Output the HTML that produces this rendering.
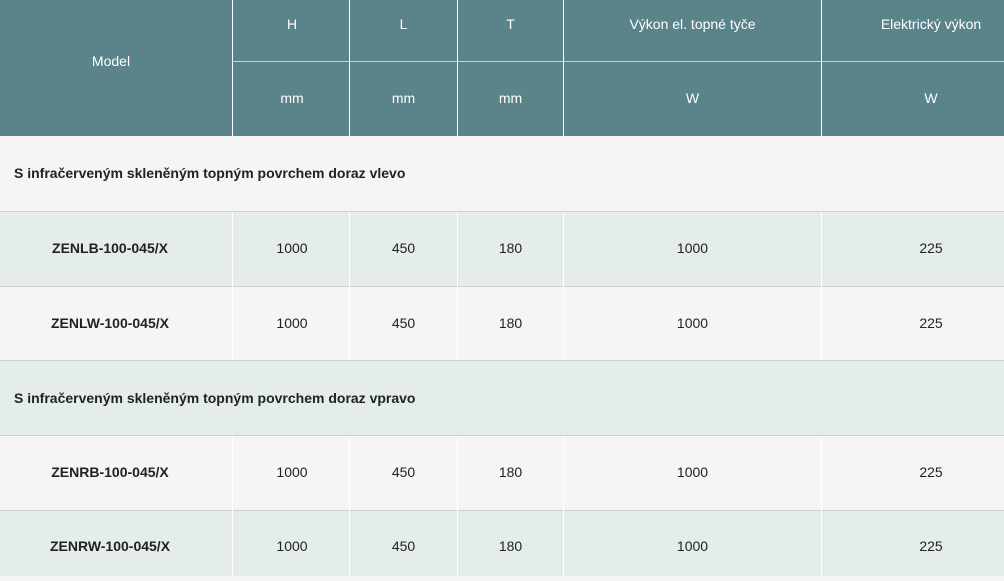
<!DOCTYPE html>
<html><head><meta charset="utf-8"><style>
body{margin:0;width:1004px;height:576px;overflow:hidden;background:#f5f5f5;font-family:"Liberation Sans",Arial,sans-serif;font-size:14px;color:#222;position:relative}
.a{position:absolute;display:flex;align-items:center;justify-content:center;box-sizing:border-box}
.h{background:#5a8489;color:#fff}
.r{position:absolute;left:0;width:1004px;box-sizing:border-box;border-bottom:1px solid #cfcfcf}
.v{position:absolute;width:1px;background:#fff}
.b{font-weight:bold}
</style></head><body>
<div style="position:absolute;left:0;top:0;width:1004px;height:136px;background:#5a8489"></div>
<div class="a h" style="left:0;top:0;width:222px;height:122px">Model</div>
<div class="a h" style="left:234px;top:0;width:116px;height:48px">H</div>
<div class="a h" style="left:350px;top:0;width:107px;height:48px">L</div>
<div class="a h" style="left:458px;top:0;width:105px;height:48px">T</div>
<div class="a h" style="left:564px;top:0;width:257px;height:48px">Výkon el. topné tyče</div>
<div class="a h" style="left:822px;top:0;width:218px;height:48px">Elektrický výkon</div>
<div style="position:absolute;left:233px;top:61px;width:771px;height:1px;background:#ccd"></div>
<div class="a h" style="left:234px;top:62px;width:116px;height:72px">mm</div>
<div class="a h" style="left:350px;top:62px;width:107px;height:72px">mm</div>
<div class="a h" style="left:458px;top:62px;width:105px;height:72px">mm</div>
<div class="a h" style="left:564px;top:62px;width:257px;height:72px">W</div>
<div class="a h" style="left:822px;top:62px;width:218px;height:72px">W</div>

<div class="r" style="top:136px;height:76px;background:#f5f5f5"></div>
<div class="a b" style="left:14px;top:136px;height:73px;justify-content:flex-start">S infračerveným skleněným topným povrchem doraz vlevo</div>
<div class="r" style="top:212px;height:75px;background:#e4ecec"></div>
<div class="r" style="top:287px;height:74px;background:#f5f5f5"></div>
<div class="r" style="top:361px;height:75px;background:#e4ecec"></div>
<div class="a b" style="left:14px;top:361px;height:73px;justify-content:flex-start">S infračerveným skleněným topným povrchem doraz vpravo</div>
<div class="r" style="top:436px;height:75px;background:#f5f5f5"></div>
<div class="r" style="top:511px;height:65px;background:#e4ecec;border:none"></div>

<div class="v" style="left:232px;top:0;height:136px"></div>
<div class="v" style="left:349px;top:0;height:136px"></div>
<div class="v" style="left:457px;top:0;height:136px"></div>
<div class="v" style="left:563px;top:0;height:136px"></div>
<div class="v" style="left:821px;top:0;height:136px"></div>
<div class="v" style="left:232px;top:212px;height:148px"></div>
<div class="v" style="left:349px;top:212px;height:148px"></div>
<div class="v" style="left:457px;top:212px;height:148px"></div>
<div class="v" style="left:563px;top:212px;height:148px"></div>
<div class="v" style="left:821px;top:212px;height:148px"></div>
<div class="v" style="left:232px;top:436px;height:140px"></div>
<div class="v" style="left:349px;top:436px;height:140px"></div>
<div class="v" style="left:457px;top:436px;height:140px"></div>
<div class="v" style="left:563px;top:436px;height:140px"></div>
<div class="v" style="left:821px;top:436px;height:140px"></div>

<div class="a b" style="left:0;top:212px;width:220px;height:72px">ZENLB-100-045/X</div>
<div class="a b" style="left:0;top:287px;width:220px;height:71px">ZENLW-100-045/X</div>
<div class="a b" style="left:0;top:436px;width:220px;height:72px">ZENRB-100-045/X</div>
<div class="a b" style="left:0;top:511px;width:220px;height:70px">ZENRW-100-045/X</div>

<div class="a" style="left:234px;top:212px;width:116px;height:72px">1000</div>
<div class="a" style="left:350px;top:212px;width:107px;height:72px">450</div>
<div class="a" style="left:458px;top:212px;width:105px;height:72px">180</div>
<div class="a" style="left:564px;top:212px;width:257px;height:72px">1000</div>
<div class="a" style="left:822px;top:212px;width:218px;height:72px">225</div>

<div class="a" style="left:234px;top:287px;width:116px;height:71px">1000</div>
<div class="a" style="left:350px;top:287px;width:107px;height:71px">450</div>
<div class="a" style="left:458px;top:287px;width:105px;height:71px">180</div>
<div class="a" style="left:564px;top:287px;width:257px;height:71px">1000</div>
<div class="a" style="left:822px;top:287px;width:218px;height:71px">225</div>

<div class="a" style="left:234px;top:436px;width:116px;height:72px">1000</div>
<div class="a" style="left:350px;top:436px;width:107px;height:72px">450</div>
<div class="a" style="left:458px;top:436px;width:105px;height:72px">180</div>
<div class="a" style="left:564px;top:436px;width:257px;height:72px">1000</div>
<div class="a" style="left:822px;top:436px;width:218px;height:72px">225</div>

<div class="a" style="left:234px;top:511px;width:116px;height:70px">1000</div>
<div class="a" style="left:350px;top:511px;width:107px;height:70px">450</div>
<div class="a" style="left:458px;top:511px;width:105px;height:70px">180</div>
<div class="a" style="left:564px;top:511px;width:257px;height:70px">1000</div>
<div class="a" style="left:822px;top:511px;width:218px;height:70px">225</div>
</body></html>
